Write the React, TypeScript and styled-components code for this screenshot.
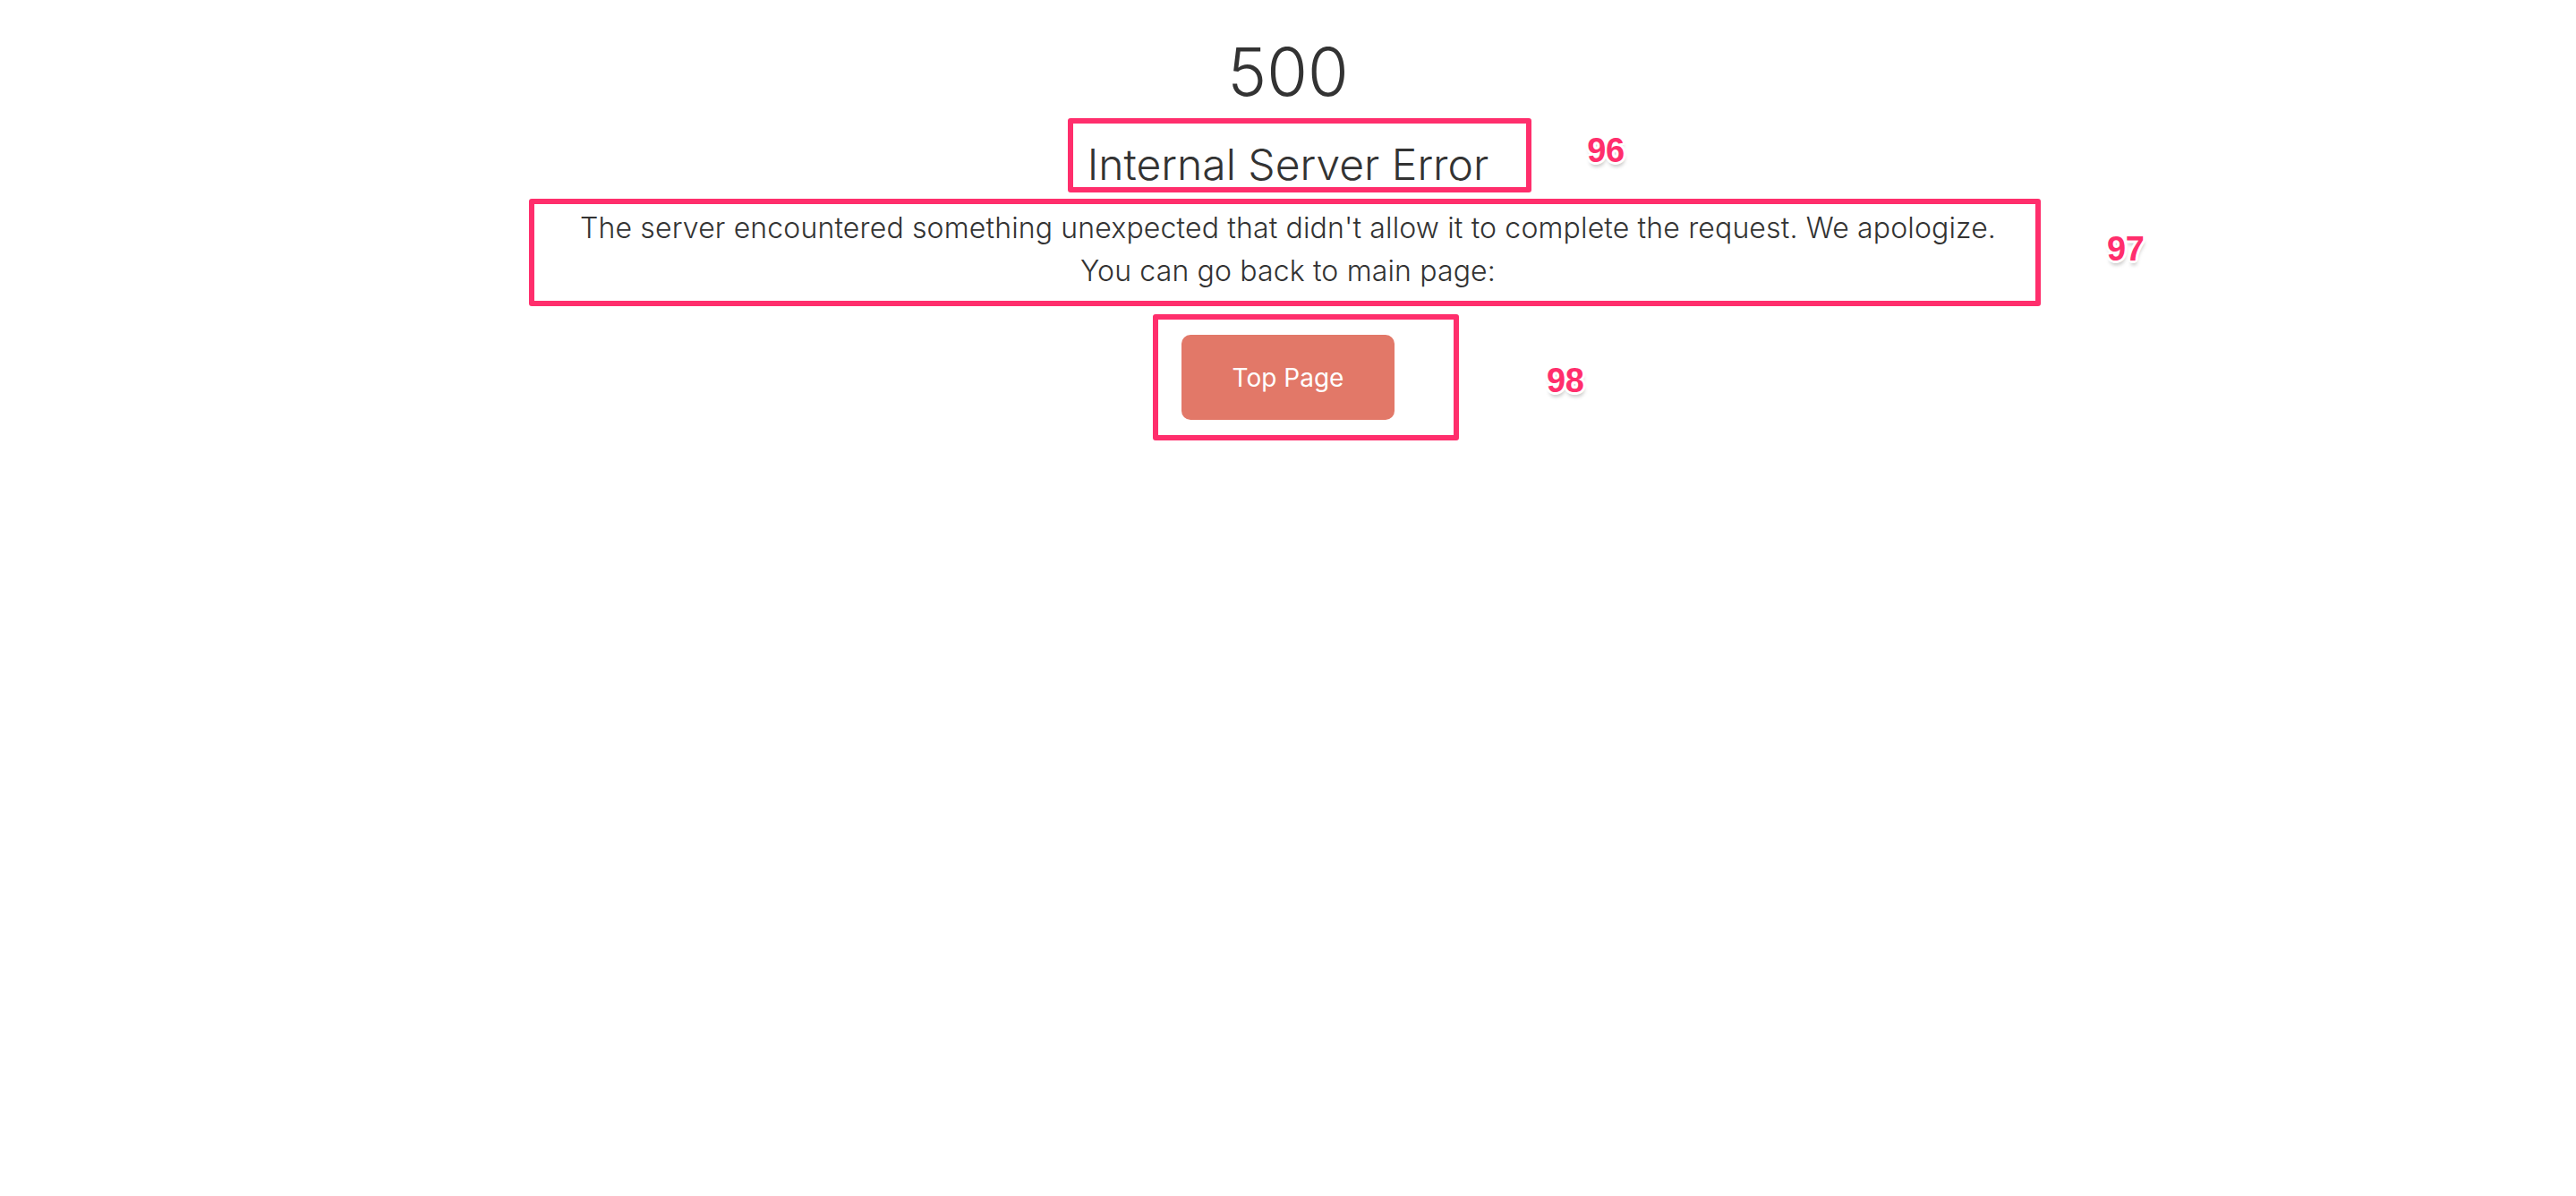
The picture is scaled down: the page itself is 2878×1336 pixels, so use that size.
import React from "react";
import styled, { createGlobalStyle } from "styled-components";

const GlobalStyle = createGlobalStyle`
  html, body {
    margin: 0;
    padding: 0;
    background: #ffffff;
  }
  body {
    font-family: Inter, "Noto Sans", "Liberation Sans", sans-serif;
    color: #333333;
  }
`;

const Page = styled.div`
  width: 100%;
  min-height: 1336px;
  background: #ffffff;
`;

const Content = styled.main`
  display: flex;
  flex-direction: column;
  align-items: center;
  padding-top: 40px;
  text-align: center;
`;

const Code = styled.h1`
  margin: 0;
  font-size: 74px;
  line-height: 80px;
  font-weight: 300;
  color: #333333;
`;

const Title = styled.h2`
  margin: 0;
  font-size: 48px;
  line-height: 56px;
  font-weight: 300;
  color: #333333;
`;

const Message = styled.p`
  margin: 0;
  font-size: 32px;
  line-height: 48px;
  font-weight: 300;
  letter-spacing: 0.15px;
  color: #333333;
`;

const TopButton = styled.a`
  display: flex;
  align-items: center;
  justify-content: center;
  width: 238px;
  height: 95px;
  border-radius: 10px;
  background: #e27868;
  color: #ffffff;
  font-size: 28px;
  font-weight: 400;
  text-decoration: none;
  cursor: pointer;
`;

/* Review annotation: a highlight frame with a numbered tag, laid over an element */
const Annotated = styled.div<{ $mt: number }>`
  position: relative;
  margin-top: ${(p) => p.$mt}px;
`;

type Insets = { t: number; r: number; b: number; l: number };

const Frame = styled.div<{ $in: Insets }>`
  position: absolute;
  top: ${(p) => -p.$in.t}px;
  right: ${(p) => -p.$in.r}px;
  bottom: ${(p) => -p.$in.b}px;
  left: ${(p) => -p.$in.l}px;
  border: 6px solid #ff2e6c;
  border-radius: 3px;
  pointer-events: none;
`;

const Tag = styled.span<{ $dx: number; $dy: number }>`
  position: absolute;
  left: calc(100% + ${(p) => p.$dx}px);
  top: ${(p) => p.$dy}px;
  font-family: "Liberation Sans", Arial, sans-serif;
  font-weight: 700;
  font-size: 38px;
  line-height: 1;
  letter-spacing: -0.5px;
  color: #ff2e6c;
  white-space: nowrap;
  text-shadow:
    2px 0 0 #fff, -2px 0 0 #fff, 0 2px 0 #fff, 0 -2px 0 #fff,
    2px 2px 0 #fff, -2px -2px 0 #fff, 2px -2px 0 #fff, -2px 2px 0 #fff,
    3px 0 0 #fff, -3px 0 0 #fff, 0 3px 0 #fff, 0 -3px 0 #fff,
    1px 5px 4px rgba(0, 0, 0, 0.25);
  pointer-events: none;
`;

function Annotation({
  n,
  mt,
  insets,
  dx,
  dy,
  children,
}: {
  n: number;
  mt: number;
  insets: Insets;
  dx: number;
  dy: number;
  children: React.ReactNode;
}) {
  return (
    <Annotated $mt={mt}>
      {children}
      <Frame $in={insets} />
      <Tag $dx={dx} $dy={dy}>
        {n}
      </Tag>
    </Annotated>
  );
}

export default function App() {
  return (
    <Page>
      <GlobalStyle />
      <Content>
        <Code>500</Code>
        <Annotation n={96} mt={36} insets={{ t: 24, r: 48, b: 3, l: 22 }} dx={110} dy={-7}>
          <Title>Internal Server Error</Title>
        </Annotation>
        <Annotation n={97} mt={19} insets={{ t: 9, r: 50, b: 15, l: 57 }} dx={124} dy={28}>
          <Message>
            The server encountered something unexpected that didn't allow it to complete the request. We apologize.
            <br />
            You can go back to main page:
          </Message>
        </Annotation>
        <Annotation n={98} mt={47} insets={{ t: 23, r: 72, b: 23, l: 32 }} dx={170} dy={32}>
          <TopButton href="#">Top Page</TopButton>
        </Annotation>
      </Content>
    </Page>
  );
}
